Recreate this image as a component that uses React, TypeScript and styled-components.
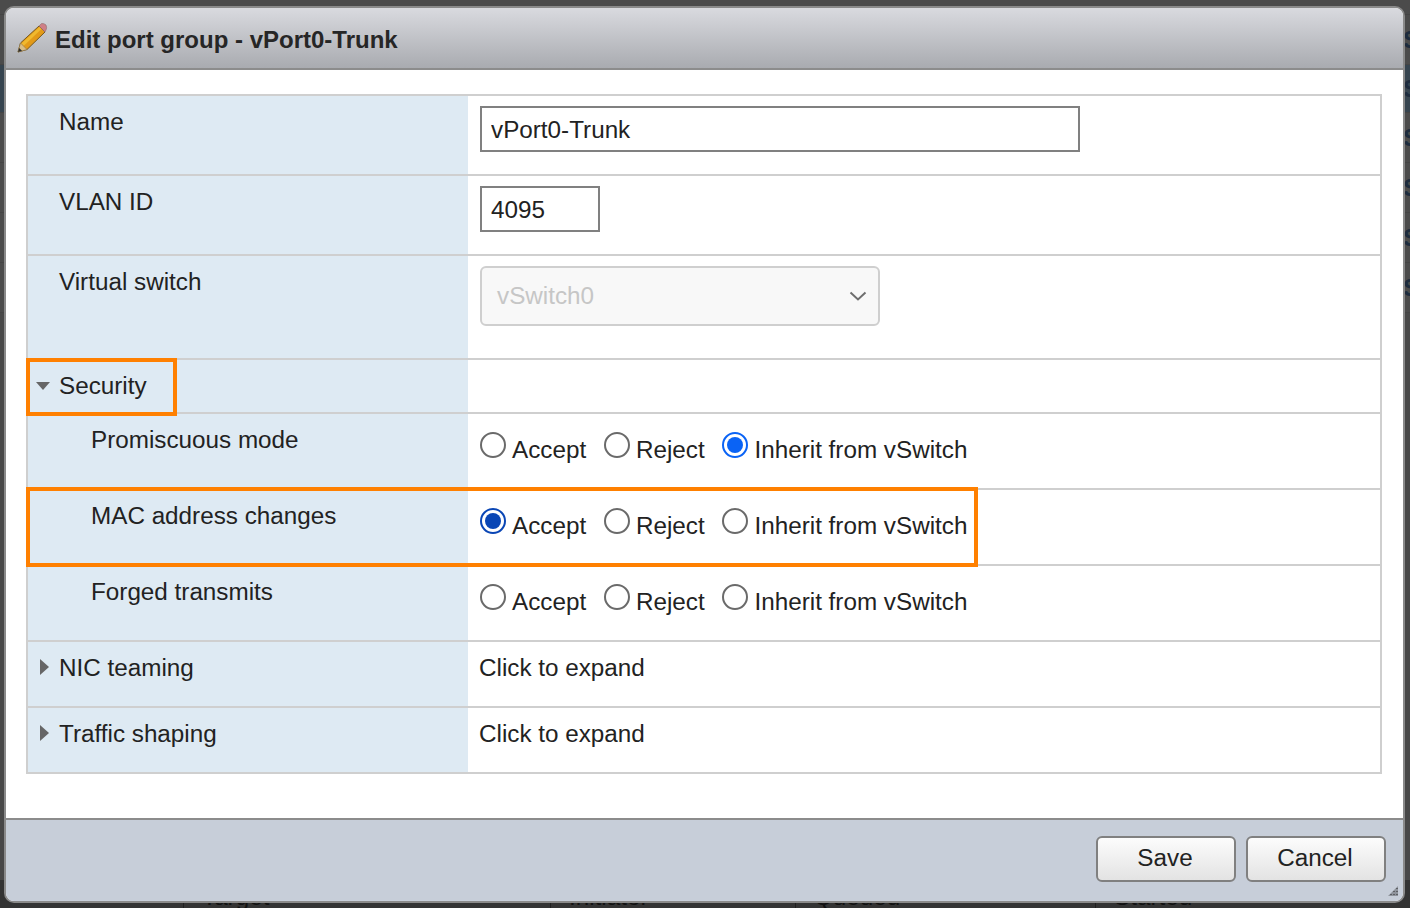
import React from 'react';
import styled, { createGlobalStyle } from 'styled-components';

const GlobalStyle = createGlobalStyle`
  html, body {
    margin: 0;
    padding: 0;
    width: 1410px;
    height: 908px;
    overflow: hidden;
    background: #4a4a4a;
  }
  * {
    box-sizing: border-box;
  }
`;

// Page behind the dialog, only its edges show
const Page = styled.div`
  position: relative;
  width: 1410px;
  height: 908px;
  padding: 6px 5px 5px 4px;
  font-family: "Liberation Sans", Arial, sans-serif;
  font-size: 24.25px;
  line-height: 28px;
  color: #222;
  overflow: hidden;
`;

const Backdrop = styled.div`
  position: absolute;
  inset: 0;
  display: flex;
  flex-direction: column;
`;

const BackdropRow = styled.div<{ $height: number; $color: string }>`
  display: flex;
  justify-content: flex-end;
  align-items: center;
  height: ${(p) => p.$height}px;
  background: ${(p) => p.$color};
  border-bottom: 1px solid #444;
  padding-right: 0;
`;

const BackdropText = styled.span`
  width: 7px;
  overflow: hidden;
  white-space: nowrap;
  color: #1d2b3d;
  font-size: 24px;
  font-weight: bold;
`;

const BackdropFiller = styled.div`
  flex: 1;
  background: #484848;
`;

const BackdropFooter = styled.div`
  display: flex;
  height: 28px;
  background: #333;
  color: #111;
  padding-top: 3px;
`;

const BackdropColumn = styled.div<{ $width: number }>`
  width: ${(p) => p.$width}px;
  padding-left: 18px;
  border-left: 1px solid #1f1f1f;
  &:first-child {
    border-left: 0;
  }
`;

const Dialog = styled.div`
  position: relative;
  display: flex;
  flex-direction: column;
  height: 897px;
  background: #fff;
  border: 2px solid #8a8a8a;
  border-radius: 10px;
  overflow: hidden;
`;

const Header = styled.header`
  display: flex;
  align-items: center;
  gap: 7px;
  flex: none;
  height: 62px;
  padding: 0 0 0 10px;
  background: linear-gradient(#d9dadf, #a9abb0);
  border-bottom: 2px solid #8c8c8c;
`;

const Title = styled.h1`
  margin: 4px 0 0;
  font-size: 24px;
  font-weight: bold;
  color: #262626;
  line-height: 28px;
`;

const Body = styled.div`
  flex: 1;
  padding: 24px 21px 0 20px;
`;

const Table = styled.div`
  border: 2px solid #cfcfcf;
  border-bottom: 0;
`;

const Row = styled.div<{ $height: number }>`
  position: relative;
  display: grid;
  grid-template-columns: 440px 1fr;
  height: ${(p) => p.$height}px;
  border-bottom: 2px solid #cfcfcf;
`;

const Label = styled.div<{ $indent?: boolean }>`
  display: flex;
  align-items: flex-start;
  padding: 12px 0 0 ${(p) => (p.$indent ? 63 : 31)}px;
  background: #deeaf3;
  position: relative;
`;

const Value = styled.div<{ $plain?: boolean }>`
  padding: ${(p) => (p.$plain ? '12px 0 0 11px' : '10px 0 0 12px')};
`;

const TextInput = styled.input<{ $width: number }>`
  display: block;
  width: ${(p) => p.$width}px;
  height: 46px;
  padding: 1px 9px 0;
  border: 2px solid #808080;
  border-radius: 0;
  outline: none;
  background: #fff;
  font: inherit;
  color: #222;
`;

const Select = styled.div`
  display: flex;
  align-items: center;
  justify-content: space-between;
  width: 400px;
  height: 60px;
  padding: 0 11px 0 15px;
  border: 2px solid #cfcfcf;
  border-radius: 6px;
  background: #f8f8f8;
  color: #c6c6c6;
`;

const Caret = styled.span<{ $open?: boolean }>`
  position: absolute;
  width: 0;
  height: 0;
  ${(p) =>
    p.$open
      ? `
    left: 8px;
    top: 22px;
    border-left: 7.5px solid transparent;
    border-right: 7.5px solid transparent;
    border-top: 8px solid #666;
  `
      : `
    left: 12px;
    top: 17px;
    border-top: 8px solid transparent;
    border-bottom: 8px solid transparent;
    border-left: 9px solid #666;
  `}
`;

const RadioGroup = styled.div`
  display: flex;
  gap: 17.8px;
  padding-top: 8px;
`;

const RadioOption = styled.label`
  display: flex;
  gap: 6px;
`;

const RadioCircle = styled.span<{ $checked?: boolean; $color?: string }>`
  display: block;
  position: relative;
  flex: none;
  width: 26px;
  height: 26px;
  border-radius: 50%;
  border: 2px solid ${(p) => (p.$checked ? p.$color : '#6a6a6a')};
  background: #fff;
  &::after {
    content: '';
    display: ${(p) => (p.$checked ? 'block' : 'none')};
    position: absolute;
    inset: 3px;
    border-radius: 50%;
    background: ${(p) => p.$color};
  }
`;

const RadioText = styled.span`
  margin-top: 4px;
`;

const Highlight = styled.div<{ $width: number; $height: number; $top: number }>`
  position: absolute;
  z-index: 2;
  left: -2px;
  top: ${(p) => p.$top}px;
  width: ${(p) => p.$width}px;
  height: ${(p) => p.$height}px;
  border: 4px solid #ff8000;
  pointer-events: none;
`;

const Footer = styled.footer`
  display: flex;
  justify-content: flex-end;
  gap: 10px;
  flex: none;
  height: 83px;
  padding: 16px 17px 0 0;
  background: #c7ced9;
  border-top: 2px solid #8c8c8c;
`;

const Button = styled.button`
  width: 140px;
  height: 46px;
  padding: 0 2px 2px 0;
  border: 2px solid #808080;
  border-radius: 6px;
  background: linear-gradient(#fcfcfc, #e3e3e3);
  font: inherit;
  color: #222;
`;

const Grip = styled.svg`
  position: absolute;
  right: 4px;
  bottom: 4px;
`;

const Pencil = () => (
  <svg width="32" height="32" viewBox="0 0 32 32">
    <path d="M2 30 L4.5 21 L23 4 L29 10 L11 27.5 Z" fill="#e39a18" stroke="#76591f" strokeWidth="1" />
    <path d="M5.5 21.5 L23.5 5 L25.5 7 L7.5 24 Z" fill="#f0b92f" />
    <path d="M2 30 L4.5 21 L7.5 24 L11 27.5 Z" fill="#d9bd86" stroke="#8a7650" strokeWidth="0.6" />
    <path d="M2 30 L3.2 26 L6 28.8 Z" fill="#2e2e2e" />
    <path d="M23 4 L25.5 1.6 Q28 1 30 3 Q31 5.5 30.4 7 L29 10 Z" fill="#cf7f86" stroke="#8c6c6c" strokeWidth="0.6" />
  </svg>
);

const Chevron = () => (
  <svg width="18" height="10" viewBox="0 0 18 10">
    <path d="M1.5 1.5 L9 8.5 L16.5 1.5" fill="none" stroke="#6e6e6e" strokeWidth="2" />
  </svg>
);

const GripMark = () => (
  <>
    <path d="M11 1 L11 11 L1 11 Z" fill="#8f949c" />
    <path d="M10 3 v1 M10 6 v1 M10 9 v1 M7 6 v1 M7 9 v1 M4 9 v1" stroke="#5f6166" strokeWidth="2" />
  </>
);

type RadioRowProps = { selected: number; color?: string };

const options = ['Accept', 'Reject', 'Inherit from vSwitch'];

const RadioRow: React.FC<RadioRowProps> = ({ selected, color = '#0a63f5' }) => (
  <RadioGroup>
    {options.map((opt, i) => (
      <RadioOption key={opt}>
        <RadioCircle $checked={i === selected} $color={color} />
        <RadioText>{opt}</RadioText>
      </RadioOption>
    ))}
  </RadioGroup>
);

const App: React.FC = () => {
  return (
    <Page>
      <GlobalStyle />
      <Backdrop>
        <BackdropRow $height={15} $color="#4b4b4b" />
        {[0, 1, 2, 3, 4, 5].map((i) => (
          <BackdropRow key={i} $height={i === 1 ? 48 : 50} $color={i === 1 ? '#36444f' : '#4b4b4b'}>
            <BackdropText>Sv</BackdropText>
          </BackdropRow>
        ))}
        <BackdropFiller />
        <BackdropFooter>
          <BackdropColumn $width={183} />
          <BackdropColumn $width={367}>Target</BackdropColumn>
          <BackdropColumn $width={245}>Initiator</BackdropColumn>
          <BackdropColumn $width={300}>Queued</BackdropColumn>
          <BackdropColumn $width={315}>Started</BackdropColumn>
        </BackdropFooter>
      </Backdrop>

      <Dialog>
        <Header>
          <Pencil />
          <Title>Edit port group - vPort0-Trunk</Title>
        </Header>
        <Body>
          <Table>
            <Row $height={80}>
              <Label>Name</Label>
              <Value>
                <TextInput $width={600} defaultValue="vPort0-Trunk" />
              </Value>
            </Row>
            <Row $height={80}>
              <Label>VLAN ID</Label>
              <Value>
                <TextInput $width={120} defaultValue="4095" />
              </Value>
            </Row>
            <Row $height={104}>
              <Label>Virtual switch</Label>
              <Value>
                <Select>
                  vSwitch0
                  <Chevron />
                </Select>
              </Value>
            </Row>
            <Row $height={54}>
              <Label>
                <Caret $open />
                Security
              </Label>
              <Value />
              <Highlight $top={-2} $width={151} $height={58} />
            </Row>
            <Row $height={76}>
              <Label $indent>Promiscuous mode</Label>
              <Value>
                <RadioRow selected={2} />
              </Value>
            </Row>
            <Row $height={76}>
              <Label $indent>MAC address changes</Label>
              <Value>
                <RadioRow selected={0} color="#0a46b5" />
              </Value>
              <Highlight $top={-3} $width={952} $height={80} />
            </Row>
            <Row $height={76}>
              <Label $indent>Forged transmits</Label>
              <Value>
                <RadioRow selected={-1} />
              </Value>
            </Row>
            <Row $height={66}>
              <Label>
                <Caret />
                NIC teaming
              </Label>
              <Value $plain>Click to expand</Value>
            </Row>
            <Row $height={66}>
              <Label>
                <Caret />
                Traffic shaping
              </Label>
              <Value $plain>Click to expand</Value>
            </Row>
          </Table>
        </Body>
        <Footer>
          <Button>Save</Button>
          <Button>Cancel</Button>
        </Footer>
        <Grip width="12" height="12" viewBox="0 0 12 12">
          <GripMark />
        </Grip>
      </Dialog>
    </Page>
  );
};

export default App;
